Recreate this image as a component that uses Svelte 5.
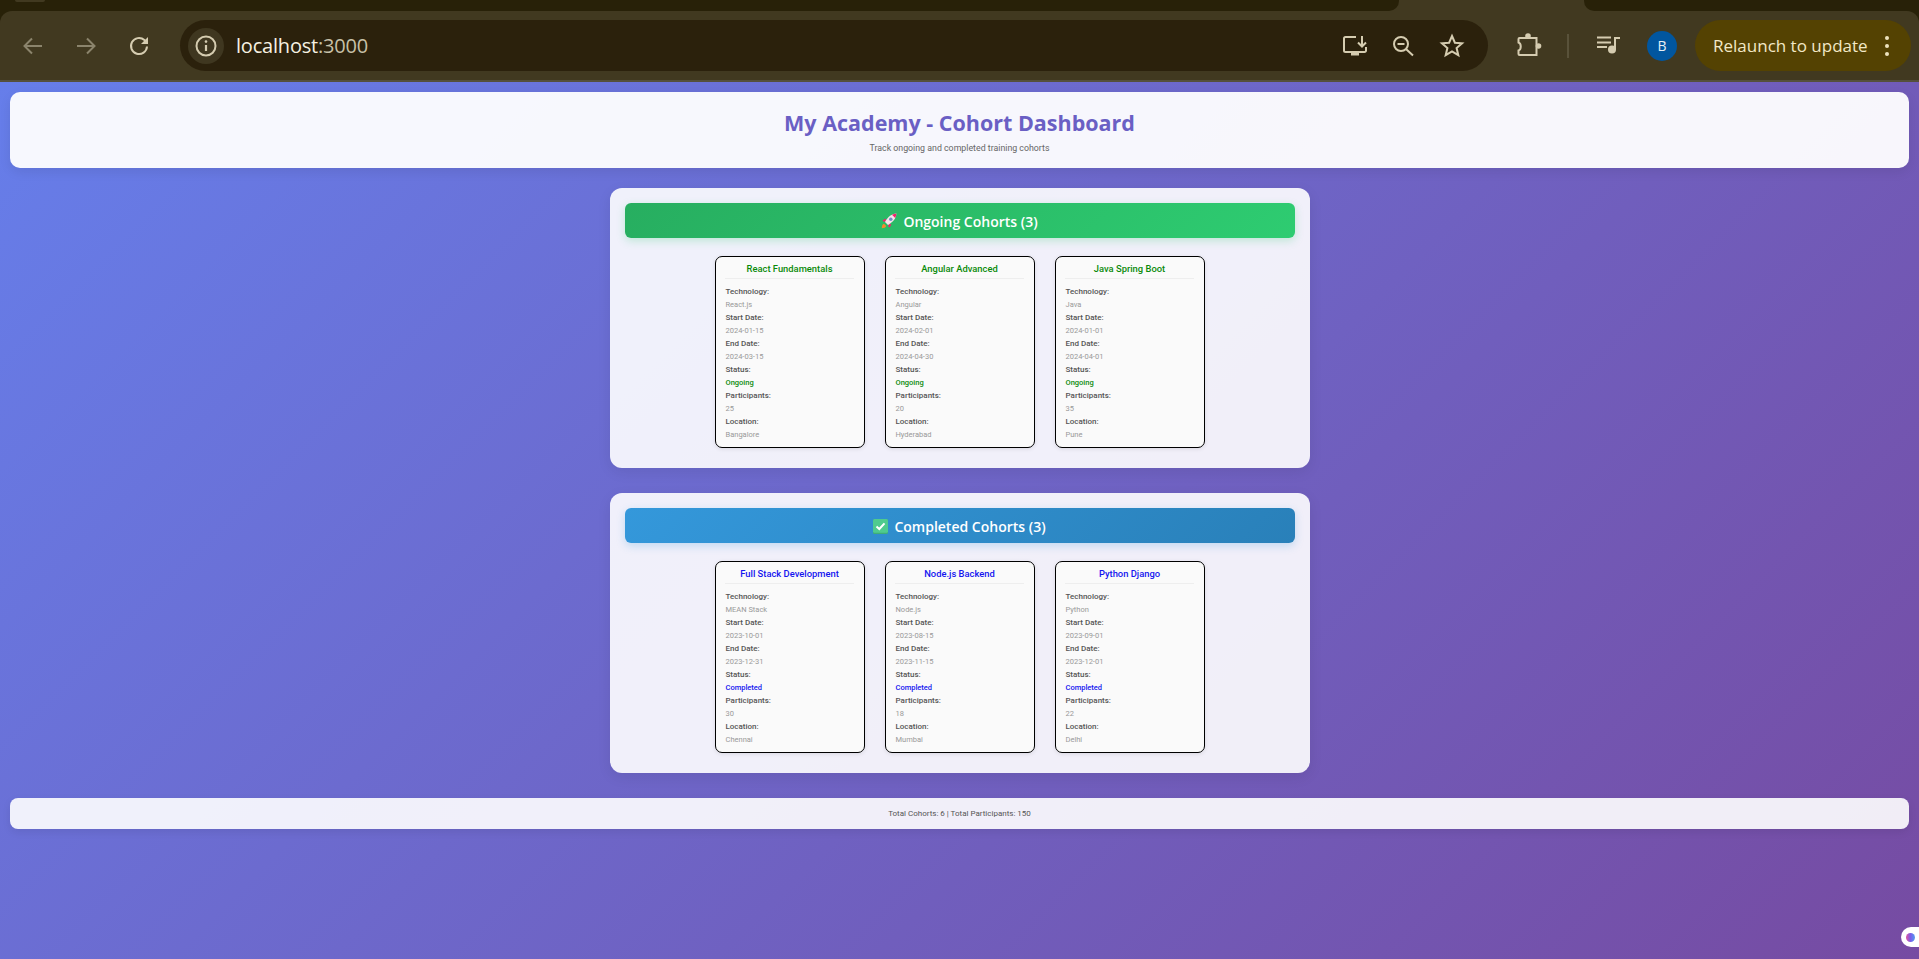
<script lang="ts">
	interface Cohort {
		name: string;
		tech: string;
		start: string;
		end: string;
		status: string;
		count: number;
		location: string;
	}

	const ongoing: Cohort[] = [
		{ name: 'React Fundamentals', tech: 'React.js', start: '2024-01-15', end: '2024-03-15', status: 'Ongoing', count: 25, location: 'Bangalore' },
		{ name: 'Angular Advanced', tech: 'Angular', start: '2024-02-01', end: '2024-04-30', status: 'Ongoing', count: 20, location: 'Hyderabad' },
		{ name: 'Java Spring Boot', tech: 'Java', start: '2024-01-01', end: '2024-04-01', status: 'Ongoing', count: 35, location: 'Pune' }
	];

	const completed: Cohort[] = [
		{ name: 'Full Stack Development', tech: 'MEAN Stack', start: '2023-10-01', end: '2023-12-31', status: 'Completed', count: 30, location: 'Chennai' },
		{ name: 'Node.js Backend', tech: 'Node.js', start: '2023-08-15', end: '2023-11-15', status: 'Completed', count: 18, location: 'Mumbai' },
		{ name: 'Python Django', tech: 'Python', start: '2023-09-01', end: '2023-12-01', status: 'Completed', count: 22, location: 'Delhi' }
	];
</script>

{#snippet card(c: Cohort, tone: string)}
	<div class="card {tone}">
		<h3>{c.name}</h3>
		<div class="row"><strong>Technology:</strong><span>{c.tech}</span></div>
		<div class="row"><strong>Start Date:</strong><span>{c.start}</span></div>
		<div class="row"><strong>End Date:</strong><span>{c.end}</span></div>
		<div class="row"><strong>Status:</strong><span class="status">{c.status}</span></div>
		<div class="row"><strong>Participants:</strong><span>{c.count}</span></div>
		<div class="row"><strong>Location:</strong><span>{c.location}</span></div>
	</div>
{/snippet}

<div class="window">
	<div class="tabstrip">
		<div class="tab-dark left"><div class="tab-bump"></div></div>
		<div class="tab-dark right"></div>
	</div>
	<div class="toolbar">
		<div class="nav">
			<svg class="dim" width="24" height="24" viewBox="0 0 24 24"><path d="M21 12H4M11 4.500 3.500 12l7.500 7.500" /></svg>
			<svg class="dim" width="24" height="24" viewBox="0 0 24 24"><path d="M3 12h17M13 4.500l7.500 7.500-7.500 7.500" /></svg>
			<svg width="24" height="24" viewBox="0 0 24 24"><path d="M20 12.500a8 8 0 1 1-2.600-6.400L20 8.600" /><path class="solid" d="M21 3v7h-7z" /></svg>
		</div>
		<div class="omnibox">
			<div class="info">
				<svg width="24" height="24" viewBox="0 0 24 24"><circle cx="12" cy="12" r="9.500" /><path class="thin" d="M12 11v6" /><circle class="solid" cx="12" cy="7.600" r="1.300" /></svg>
			</div>
			<span class="url">localhost<span class="port">:3000</span></span>
			<div class="omni-icons">
				<svg width="28" height="28" viewBox="0 0 28 28">
					<path d="M15 5H4.500A1.500 1.500 0 0 0 3 6.500v12A1.500 1.500 0 0 0 4.500 20h19a1.500 1.500 0 0 0 1.500-1.500V15" />
					<path class="solid" d="M10 20h8v3.500h-8z" />
					<path d="M21 4v10M17 10.500l4 4 4-4" />
				</svg>
				<svg width="28" height="28" viewBox="0 0 28 28"><circle cx="11" cy="12" r="7" /><path d="M7.500 12h7M16 17l7 6.500" /></svg>
				<svg width="28" height="28" viewBox="0 0 28 28"><path d="m14 4 2.900 6.700 7.200.6-5.500 4.800 1.700 7.100-6.300-3.800-6.300 3.800 1.700-7.100-5.500-4.800 7.200-.6z" /></svg>
			</div>
		</div>
		<div class="actions">
			<svg width="28" height="28" viewBox="0 0 28 28">
				<path d="M5.500 6H22.500V23H5.500A1 1 0 0 1 4.500 22V18.500C7.500 17.500 7.500 11.500 4.500 10.500V7A1 1 0 0 1 5.500 6Z" />
				<circle class="solid" cx="14" cy="4" r="2.800" />
				<circle class="solid" cx="24.500" cy="14" r="2.800" />
			</svg>
			<div class="sep"></div>
			<svg width="28" height="28" viewBox="0 0 28 28"><path d="M3 5.500h14M3 10.500h14M3 15h10M21 18V6h5" /><circle class="solid" cx="18" cy="17.500" r="4" /></svg>
			<div class="avatar">B</div>
			<div class="relaunch">
				<span>Relaunch to update</span>
				<div class="dots"><i></i><i></i><i></i></div>
			</div>
		</div>
	</div>

	<main class="page">
		<header class="banner">
			<h1>My Academy - Cohort Dashboard</h1>
			<p>Track ongoing and completed training cohorts</p>
		</header>

		<section class="panel">
			<h2 class="ongoing-head">
				<svg width="16" height="16" viewBox="0 0 16 16">
					<path fill="#f58a2e" d="M.8 15.200c0-2.200.7-3.900 2.200-4.400l2.200 2.200c-.5 1.500-2.200 2.200-4.400 2.200z" />
					<path fill="#f0246e" d="M4.800 5.600 1.600 7.200l1 1.600 2.400-.4zM10.400 11.200 8.800 14.400l-1.600-1 .4-2.400z" />
					<path fill="#f7e4ea" d="M15.400.6C10.800.9 6.800 3.800 4 9l3 3c5.200-2.800 8.100-6.800 8.400-11.400z" />
					<path fill="#f0246e" d="M15.400.6c-1.600.1-3 .5-4.400 1.200L14.200 5c.7-1.400 1.100-2.800 1.200-4.400z" />
					<circle cx="9.800" cy="6.200" r="1.700" fill="#6f8fc8" />
				</svg>
				Ongoing Cohorts (3)
			</h2>
			<div class="cards">
				{#each ongoing as c (c.name)}
					{@render card(c, 'green')}
				{/each}
			</div>
		</section>

		<section class="panel">
			<h2 class="completed-head">
				<svg width="15" height="15" viewBox="0 0 15 15">
					<rect width="15" height="15" rx="1.500" fill="#3fae78" />
					<rect width="15" height="13.800" rx="1.500" fill="#4fcb8e" />
					<path d="M3.500 7.500 6.300 10 11.500 4.300" fill="none" stroke="#fff" stroke-width="2" />
				</svg>
				Completed Cohorts (3)
			</h2>
			<div class="cards">
				{#each completed as c (c.name)}
					{@render card(c, 'blue')}
				{/each}
			</div>
		</section>

		<footer class="summary">Total Cohorts: 6 | Total Participants: 150</footer>
	</main>

	<div class="corner-badge"><i></i></div>
</div>

<style>
	:global(body) {
		margin: 0;
	}

	.window {
		position: relative;
		display: flex;
		flex-direction: column;
		height: 959px;
		overflow: hidden;
		background: #282108;
		font-family: 'Open Sans', 'Noto Sans', sans-serif;
	}

	.tabstrip {
		display: flex;
		justify-content: space-between;
		height: 11px;
		flex-shrink: 0;
		background: #413920;
	}

	.tab-dark {
		position: relative;
		height: 11px;
		background: #282108;
	}

	.tab-dark.left {
		width: 1399px;
		border-radius: 0 0 10px 0;
	}

	.tab-dark.right {
		width: 335px;
		border-radius: 0 0 0 10px;
	}

	.tab-bump {
		position: absolute;
		left: 15px;
		top: 0;
		width: 30px;
		height: 2px;
		background: #413920;
		border-radius: 0 0 8px 8px;
	}

	.toolbar {
		display: flex;
		align-items: center;
		height: 71px;
		flex-shrink: 0;
		box-sizing: border-box;
		padding: 0 8px 0 21px;
		background: #413920;
		border-bottom: 2px solid #55503c;
		border-radius: 12px 12px 0 0;
	}

	.toolbar svg {
		display: block;
		flex-shrink: 0;
		fill: none;
		stroke: #d5ccb0;
		stroke-width: 2;
	}

	.toolbar svg .solid {
		fill: #d5ccb0;
		stroke: none;
	}

	.toolbar svg .thin {
		stroke-width: 2.200;
	}

	.nav {
		display: flex;
		align-items: center;
		gap: 29px;
		width: 159px;
	}

	.nav .dim {
		stroke: #8b846c;
	}

	.omnibox {
		display: flex;
		align-items: center;
		width: 1308px;
		height: 51px;
		box-sizing: border-box;
		padding: 0 22px 0 8px;
		border-radius: 26px;
		background: #2b210c;
	}

	.info {
		display: flex;
		align-items: center;
		justify-content: center;
		width: 36px;
		height: 36px;
		border-radius: 50%;
		background: #3f3720;
	}

	.url {
		margin-left: 12px;
		font-size: 20px;
		color: #f6f1e2;
		letter-spacing: -0.2px;
	}

	.port {
		color: #c7c0a8;
	}

	.omni-icons {
		display: flex;
		align-items: center;
		gap: 20.500px;
		margin-left: auto;
	}

	.actions {
		display: flex;
		align-items: center;
		margin-left: 26px;
	}

	.sep {
		width: 2px;
		height: 24px;
		margin: 0 25px;
		background: #59523a;
	}

	.avatar {
		display: flex;
		align-items: center;
		justify-content: center;
		width: 30px;
		height: 30px;
		margin-left: 25px;
		border-radius: 50%;
		background: #01569f;
		color: #e8eef5;
		font-size: 14px;
	}

	.relaunch {
		display: flex;
		align-items: center;
		justify-content: space-between;
		width: 216px;
		height: 51px;
		box-sizing: border-box;
		margin-left: 18px;
		padding: 0 22px 0 18px;
		border-radius: 26px;
		background: #544202;
		color: #f2e8c6;
		font-size: 17px;
		white-space: nowrap;
	}

	.dots {
		display: flex;
		flex-direction: column;
		gap: 4px;
	}

	.dots i {
		display: block;
		width: 4px;
		height: 4px;
		border-radius: 50%;
		background: #eee3bd;
	}

	.page {
		flex: 1;
		box-sizing: border-box;
		padding: 10px;
		background: linear-gradient(135deg, #667eea 0%, #764ba2 100%);
	}

	.banner {
		height: 76px;
		box-sizing: border-box;
		padding-top: 16px;
		margin-bottom: 20px;
		text-align: center;
		background: rgba(255, 255, 255, 0.95);
		border-radius: 10px;
		box-shadow: 0 4px 12px rgba(0, 0, 0, 0.08);
	}

	.banner h1 {
		margin: 0 0 4px;
		font-size: 21.500px;
		line-height: 30px;
		font-weight: 700;
		color: #6a5fc4;
	}

	.banner p {
		margin: 0;
		font-family: Roboto, sans-serif;
		font-size: 8.800px;
		line-height: 13px;
		color: #666;
	}

	.panel {
		width: 700px;
		height: 280px;
		box-sizing: border-box;
		margin: 0 auto 25px;
		padding: 15px 15px 20px;
		background: rgba(255, 255, 255, 0.9);
		border-radius: 12px;
		box-shadow: 0 4px 14px rgba(0, 0, 0, 0.08);
	}

	.panel h2 {
		display: flex;
		align-items: center;
		justify-content: center;
		gap: 6px;
		height: 35px;
		box-sizing: border-box;
		padding-top: 1px;
		margin: 0 0 18px;
		font-size: 14px;
		font-weight: 600;
		color: #fff;
		border-radius: 6px;
	}

	.ongoing-head {
		background: linear-gradient(135deg, #27ae60, #2ecc71);
		box-shadow: 0 3px 8px rgba(46, 204, 113, 0.25);
	}

	.completed-head {
		background: linear-gradient(135deg, #3498db, #2980b9);
		box-shadow: 0 3px 8px rgba(52, 152, 219, 0.25);
	}

	.cards {
		display: flex;
		justify-content: center;
		gap: 20px;
	}

	.card {
		width: 150px;
		height: 192px;
		box-sizing: border-box;
		padding: 5.500px 9.500px 6px;
		background: #fafafa;
		border: 1.500px solid #000;
		border-radius: 7px;
		box-shadow: 0 1px 4px rgba(0, 0, 0, 0.1);
		font-family: Roboto, sans-serif;
	}

	.card h3 {
		margin: 0 0 6px;
		padding-bottom: 3px;
		font-size: 9.400px;
		line-height: 12px;
		font-weight: 500;
		text-align: center;
		border-bottom: 1px solid #eee;
	}

	.green h3,
	.green .status {
		color: #0a8a0a;
	}

	.blue h3,
	.blue .status {
		color: #1414f0;
	}

	.row {
		display: flex;
		flex-direction: column;
		padding-left: 0.500px;
		line-height: 13px;
	}

	.row strong {
		font-weight: 500;
		font-size: 8px;
		color: #555;
	}

	.row span {
		color: #999;
		font-size: 7.500px;
	}

	.row .status {
		font-weight: 500;
	}

	.summary {
		height: 31px;
		line-height: 32px;
		text-align: center;
		font-family: Roboto, sans-serif;
		font-size: 8px;
		color: #555;
		background: rgba(255, 255, 255, 0.9);
		border-radius: 8px;
		box-shadow: 0 3px 8px rgba(0, 0, 0, 0.08);
	}

	.corner-badge {
		position: absolute;
		right: 0;
		top: 927px;
		display: flex;
		align-items: center;
		width: 18px;
		height: 20px;
		padding-left: 5px;
		box-sizing: border-box;
		background: #fff;
		border-radius: 10px 0 0 10px;
	}

	.corner-badge i {
		display: block;
		width: 9px;
		height: 9px;
		border-radius: 50%;
		background: linear-gradient(90deg, #e0559f, #7a5ce8 50%, #4f9cf0);
	}
</style>
